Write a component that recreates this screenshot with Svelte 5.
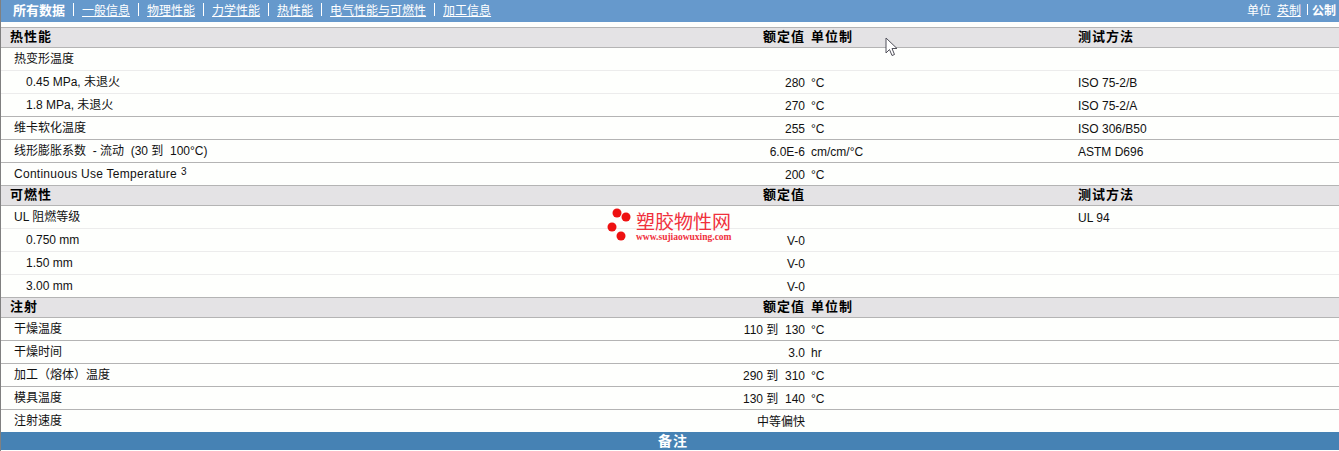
<script>
  const links = ['一般信息', '物理性能', '力学性能', '热性能', '电气性能与可燃性', '加工信息'];

  const sections = [
    {
      title: '热性能', value: '额定值', unit: '单位制', test: '测试方法',
      rows: [
        { name: '热变形温度', line: 'soft' },
        { name: '0.45 MPa, 未退火', sub: true, value: '280', unit: '°C', test: 'ISO 75-2/B', line: 'soft' },
        { name: '1.8 MPa, 未退火', sub: true, value: '270', unit: '°C', test: 'ISO 75-2/A' },
        { name: '维卡软化温度', value: '255', unit: '°C', test: 'ISO 306/B50' },
        { name: '线形膨胀系数  - 流动  (30 到  100°C)', value: '6.0E-6', unit: 'cm/cm/°C', test: 'ASTM D696' },
        { name: 'Continuous Use Temperature', note: '3', value: '200', unit: '°C' }
      ]
    },
    {
      title: '可燃性', value: '额定值', unit: '', test: '测试方法',
      rows: [
        { name: 'UL 阻燃等级', test: 'UL 94', line: 'soft' },
        { name: '0.750 mm', sub: true, value: 'V-0', line: 'soft' },
        { name: '1.50 mm', sub: true, value: 'V-0', line: 'soft' },
        { name: '3.00 mm', sub: true, value: 'V-0' }
      ]
    },
    {
      title: '注射', value: '额定值', unit: '单位制', test: '',
      rows: [
        { name: '干燥温度', value: '110 到  130', unit: '°C' },
        { name: '干燥时间', value: '3.0', unit: 'hr' },
        { name: '加工（熔体）温度', value: '290 到  310', unit: '°C' },
        { name: '模具温度', value: '130 到  140', unit: '°C' },
        { name: '注射速度', value: '中等偏快', line: 'none' }
      ]
    }
  ];
</script>

<div class="page">
  <nav class="nav">
    <div class="tabs">
      <b>所有数据</b>
      {#each links as link}
        <span class="sep"></span>
        <a href="#top">{link}</a>
      {/each}
    </div>
    <div class="units">
      <span>单位</span>
      <a href="#top">英制</a>
      <span class="bar"></span>
      <b>公制</b>
    </div>
  </nav>

  <div class="table">
    {#each sections as section}
      <div class="row head">
        <div class="name">{section.title}</div>
        <div class="value">{section.value}</div>
        <div class="unit">{section.unit}</div>
        <div class="test">{section.test}</div>
      </div>
      {#each section.rows as row}
        <div class="row {row.line ?? ''}">
          <div class="name" class:sub={row.sub} class:noted={row.note}>{row.name}{#if row.note}<sup>{row.note}</sup>{/if}</div>
          <div class="value">{row.value ?? ''}</div>
          <div class="unit">{row.unit ?? ''}</div>
          <div class="test">{row.test ?? ''}</div>
        </div>
      {/each}
    {/each}
    <div class="notes">备注</div>
  </div>

  <div class="mark">
    <svg width="26" height="34" viewBox="0 0 26 34">
      <circle cx="10" cy="5" r="4.5" />
      <circle cx="19" cy="9" r="4.5" />
      <circle cx="5" cy="19" r="4.5" />
      <circle cx="14" cy="28" r="4.5" />
    </svg>
    <div class="mark-text">
      <div class="mark-name">塑胶物性网</div>
      <div class="mark-url">www.sujiaowuxing.com</div>
    </div>
  </div>

  <svg class="cursor" width="14" height="20" viewBox="0 0 14 20">
    <path d="M1 1 L1 16 L4.500 12.500 L7 18.500 L9.500 17.500 L7 11.500 L12 11.500 Z" fill="#fff" stroke="#50505a" stroke-width="1" />
  </svg>
</div>

<style>
  :global(body) {
    margin: 0;
    background: #fff;
    overflow: hidden;
  }

  .page {
    position: relative;
    width: 1339px;
    height: 451px;
    overflow: hidden;
    box-sizing: border-box;
    border-left: 1px solid #808080;
    font-family: "Liberation Sans", "Noto Sans CJK SC", sans-serif;
    font-size: 12px;
    color: #111;
    background: #fefffd;
  }

  .nav {
    display: flex;
    justify-content: space-between;
    align-items: center;
    height: 22px;
    padding: 0 3px 3px 12px;
    box-sizing: border-box;
    background: #6699cc;
    color: #fff;
  }

  .nav a {
    color: #fff;
    text-decoration: underline;
  }

  .tabs {
    display: flex;
    align-items: center;
    gap: 8px;
  }

  .tabs b {
    font-size: 13px;
  }

  .sep {
    width: 1px;
    height: 13px;
    background: #fff;
  }

  .units {
    display: flex;
    align-items: center;
    gap: 6px;
  }

  .units .bar {
    width: 1px;
    height: 11px;
    margin-right: -2px;
    background: #fff;
  }

  .table {
    margin-top: 5px;
    border-top: 1px solid #b4b4b4;
  }

  .row {
    display: grid;
    grid-template-columns: 804px 267px 267px;
    height: 23px;
    box-sizing: border-box;
    align-items: center;
    line-height: 16px;
    border-bottom: 1px solid #b4b4b4;
  }

  .row.soft {
    border-bottom-color: #ececec;
  }

  .row.none {
    height: 22px;
    border-bottom: 0;
  }

  .row .name {
    grid-column: 1;
    grid-row: 1;
    padding-left: 13px;
    white-space: pre;
  }

  .row .sub {
    padding-left: 25px;
  }

  .row .noted {
    letter-spacing: 0.27px;
  }

  .row .value {
    grid-column: 1;
    grid-row: 1;
    padding-top: 2px;
    text-align: right;
    white-space: pre;
  }

  .row .unit,
  .row .test {
    padding-top: 2px;
    padding-left: 6px;
  }

  .row.head {
    height: 20px;
    padding-bottom: 2px;
    background: #e4e3e5;
    font-weight: bold;
    font-size: 13px;
    color: #000;
    letter-spacing: 1px;
  }

  .row.head .name {
    padding-left: 9px;
  }

  .row.head .value,
  .row.head .unit,
  .row.head .test {
    padding-top: 0;
  }

  sup {
    font-size: 10px;
    line-height: 0;
    margin-left: 4px;
    vertical-align: 3px;
  }

  .notes {
    height: 18px;
    padding-left: 6px;
    line-height: 18px;
    background: #4682b4;
    color: #fff;
    font-size: 14px;
    font-weight: bold;
    text-align: center;
    letter-spacing: 1px;
  }

  .mark {
    position: absolute;
    left: 606px;
    top: 208px;
    display: flex;
    gap: 3px;
    color: #f0303c;
  }

  .mark circle {
    fill: #ee1111;
  }

  .mark-text {
    padding-top: 4px;
  }

  .mark-name {
    font-size: 19px;
    line-height: 21px;
    white-space: nowrap;
  }

  .mark-url {
    font-family: "Liberation Serif", serif;
    font-size: 9.5px;
    font-weight: bold;
    line-height: 9px;
    white-space: nowrap;
  }

  .cursor {
    position: absolute;
    left: 884px;
    top: 37px;
  }
</style>
